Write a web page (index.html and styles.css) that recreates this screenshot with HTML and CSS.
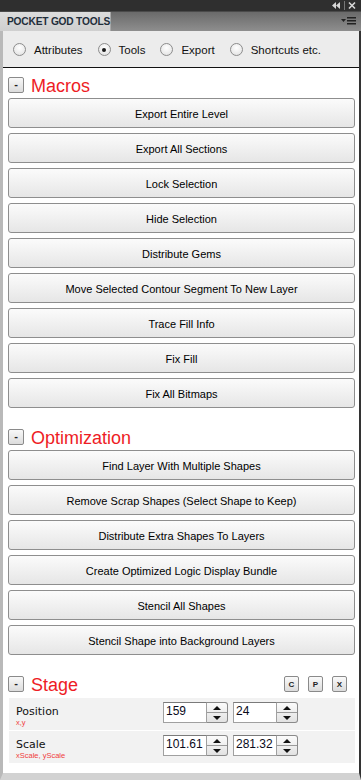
FILE: index.html
```html
<!DOCTYPE html>
<html>
<head>
<meta charset="utf-8">
<link rel="stylesheet" href="styles.css">
</head>
<body>
<div class="window">
  <div class="titlebar">
    <svg class="title-icons" width="26" height="9" viewBox="0 0 26 9">
      <path d="M4 1 L0 4.5 L4 8 Z M8 1 L4 4.5 L8 8 Z" fill="#d8d8d8"/>
      <rect x="12" y="0" width="1" height="9" fill="#777"/>
      <path d="M17 1.5 L23 7.5 M23 1.5 L17 7.5" stroke="#d8d8d8" stroke-width="1.6"/>
    </svg>
  </div>
  <div class="tabbar">
    <div class="tab">POCKET GOD TOOLS</div>
    <svg class="menu-icon" width="15" height="9" viewBox="0 0 15 9">
      <path d="M0 2 L5 2 L2.5 5 Z" fill="#222"/>
      <rect x="6" y="0" width="9" height="1.5" fill="#222"/>
      <rect x="6" y="3" width="9" height="1.5" fill="#222"/>
      <rect x="6" y="6" width="9" height="1.5" fill="#222"/>
    </svg>
  </div>
  <div class="frame">
    <div class="radios">
      <label class="radio"><span class="circle"></span>Attributes</label>
      <label class="radio"><span class="circle checked"></span>Tools</label>
      <label class="radio"><span class="circle"></span>Export</label>
      <label class="radio"><span class="circle"></span>Shortcuts etc.</label>
    </div>
    <div class="content">
      <section class="section">
        <div class="sec-head"><span class="mini">-</span><h2>Macros</h2></div>
        <div class="btns">
          <div class="btn">Export Entire Level</div>
          <div class="btn">Export All Sections</div>
          <div class="btn">Lock Selection</div>
          <div class="btn">Hide Selection</div>
          <div class="btn">Distribute Gems</div>
          <div class="btn">Move Selected Contour Segment To New Layer</div>
          <div class="btn">Trace Fill Info</div>
          <div class="btn">Fix Fill</div>
          <div class="btn">Fix All Bitmaps</div>
        </div>
      </section>
      <section class="section">
        <div class="sec-head"><span class="mini">-</span><h2>Optimization</h2></div>
        <div class="btns">
          <div class="btn">Find Layer With Multiple Shapes</div>
          <div class="btn">Remove Scrap Shapes (Select Shape to Keep)</div>
          <div class="btn">Distribute Extra Shapes To Layers</div>
          <div class="btn">Create Optimized Logic Display Bundle</div>
          <div class="btn">Stencil All Shapes</div>
          <div class="btn">Stencil Shape into Background Layers</div>
        </div>
      </section>
      <section class="section">
        <div class="sec-head">
          <span class="mini">-</span><h2>Stage</h2>
          <div class="tools">
            <span class="tool">C</span>
            <span class="tool">P</span>
            <span class="tool">X</span>
          </div>
        </div>
        <div class="props">
          <div class="prop">
            <div class="prop-label">
              <div class="prop-name">Position</div>
              <div class="prop-sub">x,y</div>
            </div>
            <div class="num"><span class="field">159</span><span class="spin"><span class="up"></span><span class="down"></span></span></div>
            <div class="num"><span class="field">24</span><span class="spin"><span class="up"></span><span class="down"></span></span></div>
          </div>
          <div class="prop">
            <div class="prop-label">
              <div class="prop-name">Scale</div>
              <div class="prop-sub">xScale, yScale</div>
            </div>
            <div class="num"><span class="field">101.61</span><span class="spin"><span class="up"></span><span class="down"></span></span></div>
            <div class="num"><span class="field">281.32</span><span class="spin"><span class="up"></span><span class="down"></span></span></div>
          </div>
        </div>
      </section>
    </div>
  </div>
</div>
</body>
</html>
```

FILE: styles.css
```css
* { box-sizing: border-box; }
html, body { margin: 0; padding: 0; }
body {
  width: 361px;
  height: 780px;
  overflow: hidden;
  background: #d2d2d2;
  font-family: "Liberation Sans", Arial, sans-serif;
}
.window {
  width: 361px;
  height: 780px;
  display: flex;
  flex-direction: column;
}
.titlebar {
  height: 11px;
  background: #2f2f2f;
  display: flex;
  justify-content: flex-end;
  align-items: center;
  padding-right: 3px;
}
.title-icons { display: block; }
.tabbar {
  height: 20px;
  background: linear-gradient(#6a6a6a, #8e8e8e);
  display: flex;
  align-items: center;
  justify-content: space-between;
  padding-right: 5px;
  border-top: 1px solid #4a4a4a;
}
.tab {
  height: 19px;
  align-self: flex-end;
  width: 111px;
  flex: none;
  white-space: nowrap;
  background: linear-gradient(#dcdcdc, #cfcfcf);
  color: #1f2d3a;
  font-weight: bold;
  font-size: 10.2px;
  letter-spacing: -0.2px;
  line-height: 19px;
  padding-left: 7px;
  border-right: 1px solid #a8a8a8;
}
.menu-icon { display: block; }
.frame {
  flex: 1;
  display: flex;
  flex-direction: column;
  border-left: 3px solid #b9b9b9;
  border-right: 2px solid #333;
  border-bottom: 7px solid #d2d2d2;
  box-shadow: inset -2px 0 0 #c6c6c6;
}
.radios {
  height: 37px;
  background: #ececec;
  border-bottom: 1px solid #111;
  display: flex;
  align-items: center;
  padding-left: 10px;
  padding-top: 1px;
  gap: 15px;
}
.radio {
  display: flex;
  align-items: center;
  gap: 8px;
  font-size: 11.5px;
  color: #111;
  white-space: nowrap;
}
.circle {
  width: 13px;
  height: 13px;
  flex: none;
  border-radius: 50%;
  border: 1px solid #8c8c8c;
  background: radial-gradient(circle at 50% 35%, #ffffff, #dedede);
  display: flex;
  align-items: center;
  justify-content: center;
}
.circle.checked::after {
  content: "";
  width: 4px;
  height: 4px;
  border-radius: 50%;
  background: #1a1a1a;
}
.content {
  flex: 1;
  background: #ffffff;
  padding: 9px 4px 0 5px;
  display: flex;
  flex-direction: column;
  gap: 21px;
}
.sec-head {
  height: 16px;
  display: flex;
  align-items: center;
  margin-bottom: 5px;
}
.mini {
  width: 16px;
  height: 16px;
  border: 1px solid #8a8a8a;
  border-radius: 2px;
  background: linear-gradient(#f8f8f8, #dcdcdc);
  font-size: 11px;
  line-height: 13px;
  text-align: center;
  color: #222;
  font-weight: bold;
  flex: none;
}
h2 {
  margin: 1px 0 0 7px;
  font-weight: normal;
  font-size: 18px;
  line-height: 16px;
  color: #ee1c25;
}
.btns {
  display: flex;
  flex-direction: column;
  gap: 5px;
}
.btn {
  height: 30px;
  border: 1px solid #8e8e8e;
  border-radius: 3px;
  background: linear-gradient(#fbfbfb, #e6e6e6);
  font-size: 11px;
  color: #000;
  display: flex;
  align-items: center;
  justify-content: center;
  padding-top: 1px;
}
.tools {
  margin-left: auto;
  margin-right: 8px;
  display: flex;
  gap: 9px;
}
.tool {
  width: 15px;
  height: 16px;
  border: 1px solid #8a8a8a;
  border-radius: 2px;
  background: linear-gradient(#fafafa, #dcdcdc);
  font-size: 8px;
  font-weight: bold;
  color: #222;
  display: flex;
  align-items: center;
  justify-content: center;
}
.props {
  margin-top: 6px;
  margin-left: 1px;
  display: flex;
  flex-direction: column;
  gap: 1px;
}
.prop {
  height: 32px;
  background: #f2f2f2;
  display: flex;
  align-items: flex-start;
  padding: 4px 0 0 7px;
  gap: 5px;
}
.prop-label {
  width: 142px;
  padding-top: 3px;
  font-family: "DejaVu Sans", Verdana, sans-serif;
}
.prop-name {
  font-size: 11px;
  color: #111;
  line-height: 13px;
}
.prop-sub {
  font-size: 7.5px;
  color: #f04040;
  line-height: 9px;
  font-family: "Liberation Sans", Arial, sans-serif;
}
.num {
  display: flex;
  height: 21px;
}
.field {
  width: 44px;
  height: 21px;
  background: #fff;
  border: 1px solid #a0a0a0;
  border-top-color: #7a7a7a;
  font-size: 12px;
  line-height: 17px;
  padding-left: 2px;
  color: #0a0a1a;
}
.spin {
  width: 21px;
  height: 21px;
  border: 1px solid #8a8a8a;
  border-left: none;
  border-radius: 0 3px 3px 0;
  display: flex;
  flex-direction: column;
  background: linear-gradient(#fbfbfb, #e2e2e2);
}
.up, .down {
  flex: 1;
  display: flex;
  align-items: center;
  justify-content: center;
}
.up { border-bottom: 1px solid #9a9a9a; }
.up::after {
  content: "";
  border-left: 4px solid transparent;
  border-right: 4px solid transparent;
  border-bottom: 4px solid #111;
}
.down::after {
  content: "";
  border-left: 4px solid transparent;
  border-right: 4px solid transparent;
  border-top: 4px solid #111;
}
```
